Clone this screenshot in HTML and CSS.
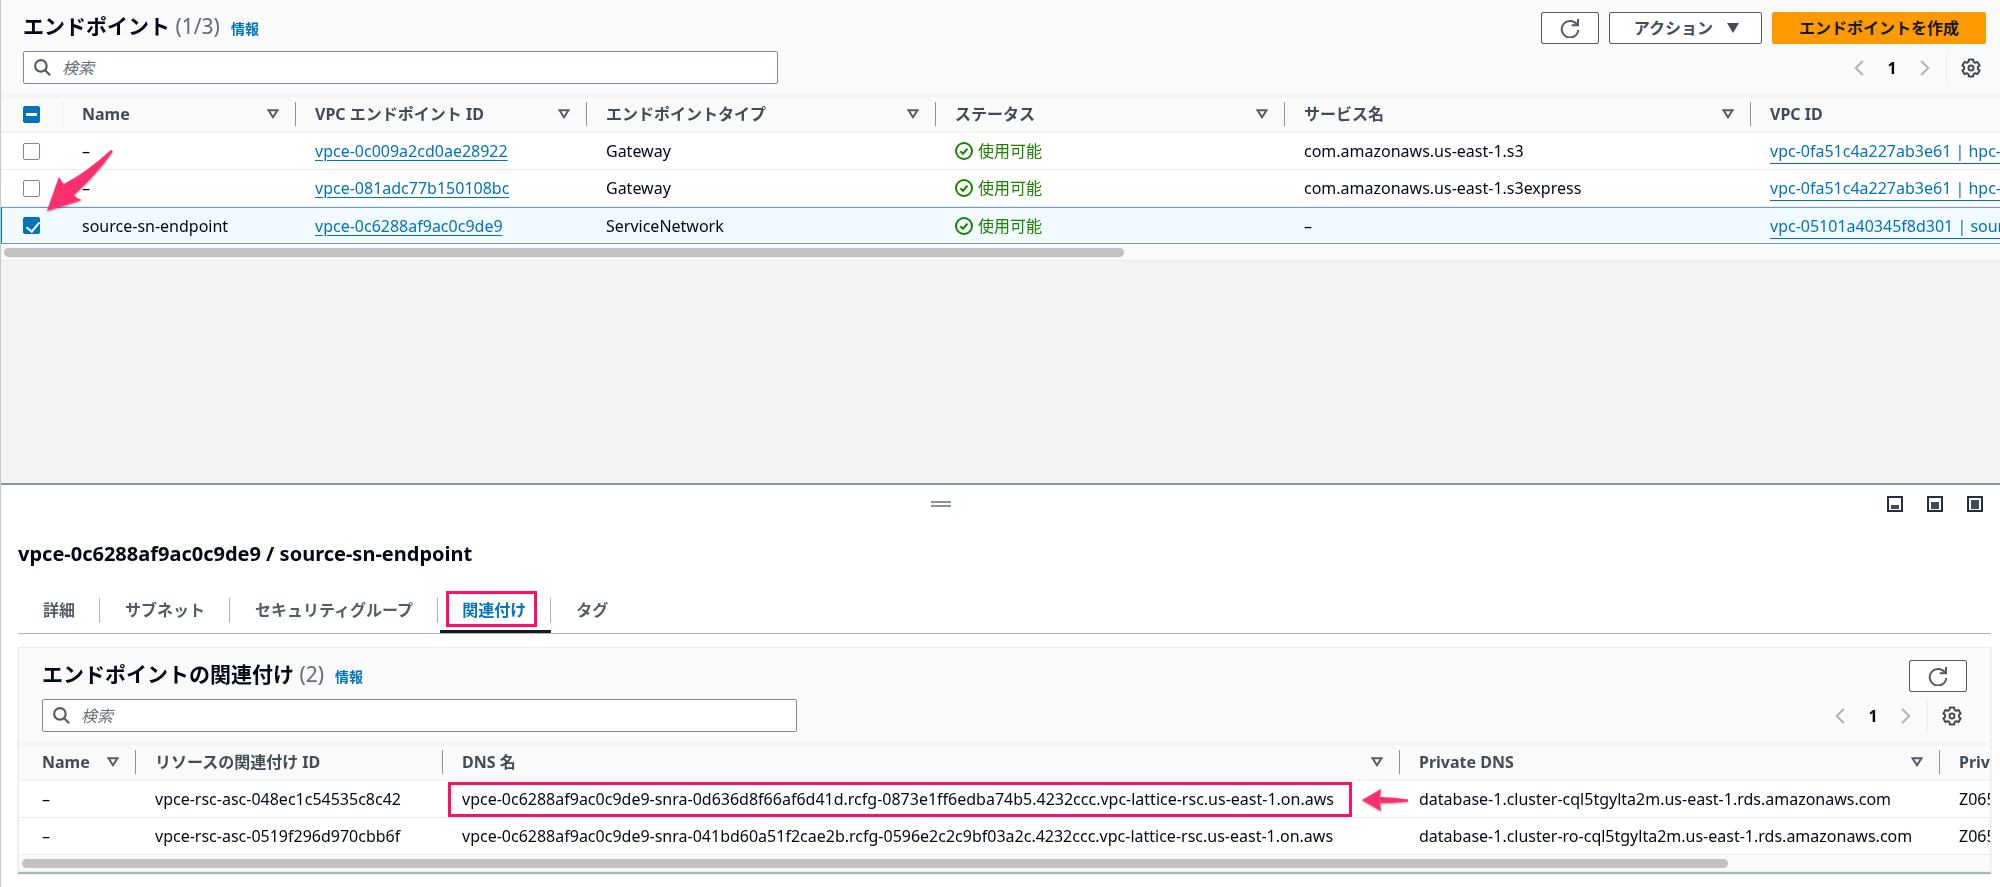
FILE: index.html
```html
<!DOCTYPE html>
<html lang="ja">
<head>
<meta charset="utf-8">
<meta name="viewport" content="width=device-width, initial-scale=1">
<title>エンドポイント</title>
<link rel="stylesheet" href="styles.css">
</head>
<body>
<svg class="sprite" aria-hidden="true">
  <symbol id="i-search" viewBox="0 0 16 16"><circle cx="6.5" cy="6.5" r="5.4"/><path d="M10.5 10.5 15.2 15.2"/></symbol>
  <symbol id="i-refresh" viewBox="0 0 20 20"><path d="M17.3 7.2A8.3 8.3 0 1 0 18.3 12"/><path d="M18 1v6.2h-6.3"/></symbol>
  <symbol id="i-sort" viewBox="0 0 12 10"><path d="M1.5 1.3h9L6 8.2z"/></symbol>
  <symbol id="i-prev" viewBox="0 0 10 16"><path d="M8.8 1 1.8 8l7 7"/></symbol>
  <symbol id="i-next" viewBox="0 0 10 16"><path d="M1.2 1l7 7-7 7"/></symbol>
  <symbol id="i-ok" viewBox="0 0 18 18"><circle cx="9" cy="9" r="8"/><path d="M5.4 9.2 8 11.7l4.500-5"/></symbol>
  <symbol id="i-gear" viewBox="0 0 20 20"><path d="M7.900 1.500h4.200l.5 2.400 1.600.9 2.300-.9 2.100 3.500-1.700 1.600v2l1.700 1.600-2.100 3.500-2.300-.9-1.600.9-.5 2.400H7.900l-.5-2.400-1.600-.9-2.300.9-2.100-3.500L3.100 11V9L1.400 7.400l2.100-3.500 2.300.9 1.600-.9z"/><circle cx="10" cy="10" r="2.500"/></symbol>
</svg>

<main class="split">
  <section class="list" aria-labelledby="list-title">
    <header class="head">
      <div class="row">
        <h1 class="title" id="list-title">エンドポイント <span class="count">(1/3)</span></h1>
        <a class="info" href="#info">情報</a>
        <div class="actions">
          <button class="btn btn-icon" type="button" aria-label="更新"><svg class="ico ico-refresh"><use href="#i-refresh"/></svg></button>
          <button class="btn btn-menu" type="button">アクション<svg class="caret" viewBox="0 0 12 10"><path d="M0 0h12L6 10z"/></svg></button>
          <button class="btn btn-primary" type="button">エンドポイントを作成</button>
        </div>
      </div>
      <div class="row">
        <label class="search"><svg class="ico ico-search"><use href="#i-search"/></svg><input type="search" placeholder="検索" aria-label="エンドポイントを検索"></label>
        <nav class="pager" aria-label="ページ">
          <button class="flat page-step" type="button" aria-label="前へ"><svg class="ico ico-page"><use href="#i-prev"/></svg></button>
          <button class="flat page-num" type="button">1</button>
          <button class="flat page-step" type="button" aria-label="次へ"><svg class="ico ico-page"><use href="#i-next"/></svg></button>
          <button class="flat gear" type="button" aria-label="設定"><svg class="ico ico-gear"><use href="#i-gear"/></svg></button>
        </nav>
      </div>
    </header>
    <div class="scroller">
      <table class="grid grid-main">
        <colgroup><col class="c-check"><col class="c-name"><col class="c-id"><col class="c-type"><col class="c-status"><col class="c-service"><col class="c-vpc"></colgroup>
        <thead>
          <tr>
            <th class="check"><input class="box box-some" type="checkbox" aria-label="すべて選択"></th>
            <th class="soft"><div class="th">Name<svg class="ico sort"><use href="#i-sort"/></svg></div></th>
            <th><div class="th">VPC エンドポイント ID<svg class="ico sort"><use href="#i-sort"/></svg></div></th>
            <th><div class="th">エンドポイントタイプ<svg class="ico sort"><use href="#i-sort"/></svg></div></th>
            <th><div class="th">ステータス<svg class="ico sort"><use href="#i-sort"/></svg></div></th>
            <th><div class="th">サービス名<svg class="ico sort"><use href="#i-sort"/></svg></div></th>
            <th><div class="th">VPC ID</div></th>
          </tr>
        </thead>
        <tbody>
          <tr>
            <td class="check"><input class="box" type="checkbox" aria-label="vpce-0c009a2cd0ae28922"></td>
            <td>–</td>
            <td><a href="#e1">vpce-0c009a2cd0ae28922</a></td>
            <td>Gateway</td>
            <td><span class="ok"><svg class="ico ico-ok"><use href="#i-ok"/></svg>使用可能</span></td>
            <td>com.amazonaws.us-east-1.s3</td>
            <td><a class="low" href="#v1">vpc-0fa51c4a227ab3e61 | hpc-vpc</a></td>
          </tr>
          <tr>
            <td class="check"><input class="box" type="checkbox" aria-label="vpce-081adc77b150108bc"></td>
            <td>–</td>
            <td><a href="#e2">vpce-081adc77b150108bc</a></td>
            <td>Gateway</td>
            <td><span class="ok"><svg class="ico ico-ok"><use href="#i-ok"/></svg>使用可能</span></td>
            <td>com.amazonaws.us-east-1.s3express</td>
            <td><a class="low" href="#v1">vpc-0fa51c4a227ab3e61 | hpc-vpc</a></td>
          </tr>
          <tr class="selected">
            <td class="check"><input class="box" type="checkbox" checked aria-label="source-sn-endpoint"><svg class="arrow arrow-row" viewBox="0 0 66 62" aria-hidden="true"><path d="M64 0Q66 0 65.500 2Q50 24 27 45Q30 49 35 50L0 61 12 27Q14 31 17 34Q40 22 64 0z"/></svg></td>
            <td>source-sn-endpoint</td>
            <td><a href="#e3">vpce-0c6288af9ac0c9de9</a></td>
            <td>ServiceNetwork</td>
            <td><span class="ok"><svg class="ico ico-ok"><use href="#i-ok"/></svg>使用可能</span></td>
            <td>–</td>
            <td><a class="low" href="#v2">vpc-05101a40345f8d301 | source-vpc</a></td>
          </tr>
        </tbody>
      </table>
    </div>
    <div class="track"><div class="thumb thumb-main"></div></div>
  </section>

  <section class="panel" aria-labelledby="panel-title">
    <div class="bar">
      <div class="grip-area"><button class="flat grip" type="button" aria-label="サイズ変更"></button></div>
      <div class="sizes">
        <button class="flat" type="button" aria-label="小"><svg class="size" viewBox="0 0 16 16"><path class="frame" d="M1 1h14v14H1z"/><path d="M4 9h8v4H4z"/></svg></button>
        <button class="flat" type="button" aria-label="中"><svg class="size" viewBox="0 0 16 16"><path class="frame" d="M1 1h14v14H1z"/><path d="M4 6h8v7H4z"/></svg></button>
        <button class="flat" type="button" aria-label="大"><svg class="size" viewBox="0 0 16 16"><path class="frame" d="M1 1h14v14H1z"/><path d="M4 4h8v9H4z"/></svg></button>
      </div>
    </div>
    <h2 class="panel-title" id="panel-title">vpce-0c6288af9ac0c9de9 / source-sn-endpoint</h2>
    <div class="tabs" role="tablist">
      <button class="tab" type="button" role="tab">詳細</button>
      <button class="tab" type="button" role="tab">サブネット</button>
      <button class="tab" type="button" role="tab">セキュリティグループ</button>
      <button class="tab tab-on" type="button" role="tab" aria-selected="true">関連付け</button>
      <button class="tab" type="button" role="tab">タグ</button>
    </div>

    <div class="card">
      <header class="head">
        <div class="row">
          <h3 class="title">エンドポイントの関連付け <span class="count">(2)</span></h3>
          <a class="info" href="#info2">情報</a>
          <div class="actions">
            <button class="btn btn-icon" type="button" aria-label="更新"><svg class="ico ico-refresh"><use href="#i-refresh"/></svg></button>
          </div>
        </div>
        <div class="row">
          <label class="search"><svg class="ico ico-search"><use href="#i-search"/></svg><input type="search" placeholder="検索" aria-label="関連付けを検索"></label>
          <nav class="pager" aria-label="ページ">
            <button class="flat page-step" type="button" aria-label="前へ"><svg class="ico ico-page"><use href="#i-prev"/></svg></button>
            <button class="flat page-num" type="button">1</button>
            <button class="flat page-step" type="button" aria-label="次へ"><svg class="ico ico-page"><use href="#i-next"/></svg></button>
            <button class="flat gear" type="button" aria-label="設定"><svg class="ico ico-gear"><use href="#i-gear"/></svg></button>
          </nav>
        </div>
      </header>
      <div class="scroller">
        <table class="grid grid-assoc">
          <colgroup><col class="d-name"><col class="d-id"><col class="d-dns"><col class="d-private"><col class="d-zone"></colgroup>
          <thead>
            <tr>
              <th class="bare"><div class="th">Name<svg class="ico sort"><use href="#i-sort"/></svg></div></th>
              <th><div class="th">リソースの関連付け ID</div></th>
              <th><div class="th">DNS 名<svg class="ico sort"><use href="#i-sort"/></svg></div></th>
              <th><div class="th">Private DNS<svg class="ico sort"><use href="#i-sort"/></svg></div></th>
              <th><div class="th">Private ホストゾーン</div></th>
            </tr>
          </thead>
          <tbody>
            <tr>
              <td>–</td>
              <td>vpce-rsc-asc-048ec1c54535c8c42</td>
              <td class="marked">vpce-0c6288af9ac0c9de9-snra-0d636d8f66af6d41d.rcfg-0873e1ff6edba74b5.4232ccc.vpc-lattice-rsc.us-east-1.on.aws<svg class="arrow arrow-dns" viewBox="0 0 46 22" aria-hidden="true"><path d="M0 11 19 0 18 8Q32 8 46 10.500V12.500Q32 14 18 14L19 22z"/></svg></td>
              <td>database-1.cluster-cql5tgylta2m.us-east-1.rds.amazonaws.com</td>
              <td>Z06506</td>
            </tr>
            <tr>
              <td>–</td>
              <td>vpce-rsc-asc-0519f296d970cbb6f</td>
              <td>vpce-0c6288af9ac0c9de9-snra-041bd60a51f2cae2b.rcfg-0596e2c2c9bf03a2c.4232ccc.vpc-lattice-rsc.us-east-1.on.aws</td>
              <td>database-1.cluster-ro-cql5tgylta2m.us-east-1.rds.amazonaws.com</td>
              <td>Z06506</td>
            </tr>
          </tbody>
        </table>
      </div>
      <div class="track"><div class="thumb thumb-assoc"></div></div>
    </div>
  </section>
</main>
</body>
</html>
```
FILE: styles.css
```css
* { box-sizing: border-box; }

body {
  margin: 0;
  background: #f2f3f3;
  color: #000716;
  font-family: "Noto Sans", "Noto Sans CJK JP", sans-serif;
  font-size: 16px;
  line-height: 24px;
}

button, input { font: inherit; color: inherit; }
h1, h2, h3 { margin: 0; }
.sprite { display: none; }

.split {
  display: flex;
  flex-direction: column;
  justify-content: space-between;
  min-height: 100vh;
  border-left: 1px solid #c6c9cc;
}

/* Shared header */
.head {
  display: flex;
  flex-direction: column;
  gap: 7px;
  padding: 12px 14px 11px 22px;
  background: #fafafa;
}
.row { display: flex; align-items: center; min-height: 32px; }
.title { margin-bottom: 4px; font-size: 21px; line-height: 28px; font-weight: 700; color: #000716; }
.count { font-weight: 400; color: #5f6b7a; }
.info { margin: 2px 0 0 11px; font-size: 14px; font-weight: 700; line-height: 20px; color: #0073bb; text-decoration: none; }
.actions { display: flex; gap: 10px; margin-left: auto; }

.btn {
  display: flex;
  align-items: center;
  justify-content: center;
  height: 32px;
  padding: 0 26px;
  border: 1px solid #545b64;
  border-radius: 2px;
  background: #fff;
  color: #424b58;
  font-weight: 700;
}
.btn-icon { width: 58px; padding: 0; }
.btn-menu { gap: 14px; padding: 0 22px 0 24px; }
.btn-primary { border-color: #ff9900; background: #ff9900; color: #16191f; }
.caret { width: 12px; height: 10px; fill: #424b58; }

.ico { display: block; flex: none; fill: none; stroke: #545b64; stroke-width: 2; }
.ico-refresh { width: 20px; height: 20px; }
.ico-search { width: 17px; height: 17px; }
.ico-page { width: 10px; height: 16px; stroke: #aab7b8; }
.ico-gear { width: 20px; height: 20px; stroke: #424b58; stroke-linejoin: round; }
.ico-ok { width: 18px; height: 18px; stroke: #1d8102; }
.sort { width: 12px; height: 10px; }

.search {
  display: flex;
  align-items: center;
  gap: 11px;
  flex: 0 1 755px;
  height: 33px;
  padding: 0 10px;
  border: 1px solid #7d8998;
  border-radius: 2px;
  background: #fff;
}
.search input { flex: 1; min-width: 0; padding: 0; border: 0; outline: 0; background: none; }
.search input::placeholder { color: #687078; font-style: italic; opacity: 1; }

.flat { display: flex; align-items: center; justify-content: center; padding: 0; border: 0; background: none; }
.pager { display: flex; align-items: center; margin-left: auto; }
.page-step { width: 30px; height: 32px; }
.page-num { width: 36px; font-weight: 700; }
.gear { width: 40px; height: 32px; margin-left: 6px; padding-left: 8px; border-left: 1px solid #eaeded; }

/* Tables */
.scroller { overflow-x: auto; scrollbar-width: none; background: #fff; }
.grid { table-layout: fixed; border-collapse: separate; border-spacing: 0; width: 100%; }
.grid-main { min-width: 2500px; }
.grid-assoc { min-width: 2240px; }
.c-check { width: 61px; }
.c-name { width: 233px; }
.c-id { width: 291px; }
.c-type, .c-status { width: 349px; }
.c-service { width: 466px; }
.d-name { width: 116px; }
.d-id { width: 307px; }
.d-dns { width: 957px; }
.d-private { width: 540px; }

.grid th {
  height: 38px;
  padding: 0;
  border-top: 2px solid #f2f3f3;
  border-bottom: 2px solid #f2f3f3;
  background: #fafafa;
  color: #424b58;
  text-align: left;
}
.th {
  display: flex;
  align-items: center;
  justify-content: space-between;
  height: 24px;
  padding: 0 16px 0 19px;
  border-left: 1px solid #879596;
  white-space: nowrap;
}
.soft .th { border-left-color: #eaeded; }
.grid td { height: 37px; padding: 0 20px; border-bottom: 1px solid #eaeded; white-space: nowrap; line-height: 24px; }
.grid .check { padding: 0 0 0 22px; }
.grid td.check { position: relative; }
.bare .th { padding-left: 23px; border-left: 0; }
.grid-assoc td:first-child { padding-left: 23px; }
.grid a { color: #0073bb; text-underline-offset: 3px; }
.grid a.low { text-underline-offset: 6px; }
.grid .selected td { height: 37px; border-top: 1px solid #6b9bd1; border-bottom-color: #6b9bd1; background: #f1faff; }
.grid .selected td:first-child { border-left: 1px solid #0073bb; padding-left: 21px; }
.ok { display: flex; align-items: center; gap: 5px; color: #1d8102; }

.box {
  appearance: none;
  display: block;
  position: relative;
  width: 17px;
  height: 17px;
  margin: 0;
  border: 1px solid #7d8998;
  border-radius: 2px;
  background: #fff;
}
.box:checked, .box-some { border-color: #0073bb; background: #0073bb; }
.box-some::after { content: ""; position: absolute; inset: 6px 2px; background: #fff; }
.box:checked::after {
  content: "";
  position: absolute;
  left: 5px;
  top: 1px;
  width: 6px;
  height: 11px;
  border: solid #fff;
  border-width: 0 2px 2px 0;
  transform: rotate(40deg);
}

.track { height: 17px; padding: 4px 3px 0; border-bottom: 1px solid #eaeded; background: #fafafa; }
.thumb { height: 9px; border-radius: 5px; background: #c1c1c1; }
.thumb-main { width: 56.2%; }
.thumb-assoc { width: 86.8%; }

/* Detail panel */
.panel { padding: 0 9px 14px 17px; border-top: 2px solid #879596; background: #fff; }
.bar { display: flex; align-items: center; gap: 24px; padding: 11px 8px 0 0; }
.grip-area { display: flex; flex: 1; justify-content: center; }
.grip { width: 20px; height: 6px; border: solid #879596; border-width: 2px 0; }
.sizes { display: flex; gap: 24px; }
.size { display: block; width: 16px; height: 16px; fill: #424b58; }
.size .frame { fill: none; stroke: #232f3e; stroke-width: 2; }
.panel-title { margin-top: 27px; font-size: 20px; line-height: 30px; font-weight: 700; }

.tabs { display: flex; margin-top: 20px; border-bottom: 1px solid #aab7b8; }
.tab {
  display: flex;
  align-items: center;
  position: relative;
  height: 44px;
  padding: 0 25px 2px;
  border: 0;
  background: none;
  color: #545b64;
  font-weight: 700;
}
.tab:not(:last-child)::after { content: ""; position: absolute; right: 0; top: 9px; width: 1px; height: 25px; background: #aab7b8; }
.tab-on { padding: 0 25px 2px 22px; margin-left: 2px; color: #0073bb; box-shadow: inset 0 -3px #16191f; }
.tab-on::before { content: ""; position: absolute; inset: 2px 14px 6px 6px; border: 3px solid #ff0f68; }

.card {
  margin-top: 13px;
  border: 1px solid #eaeded;
  border-bottom-color: #aab7b8;
  box-shadow: 0 1px 1px #aab7b8;
  background: #fafafa;
}
.card .head { padding-right: 23px; padding-left: 23px; }
.marked { position: relative; }
.marked::before { content: ""; position: absolute; left: 6px; right: 47px; top: 1px; bottom: 0; border: 3px solid #ff0f68; }

.arrow { position: absolute; fill: #ff2e6e; filter: drop-shadow(0 1px 1px #00000066); }
.arrow-row { left: 45px; bottom: 31px; width: 66px; height: 62px; }
.arrow-dns { right: -9px; top: 8px; width: 46px; height: 22px; }
```
